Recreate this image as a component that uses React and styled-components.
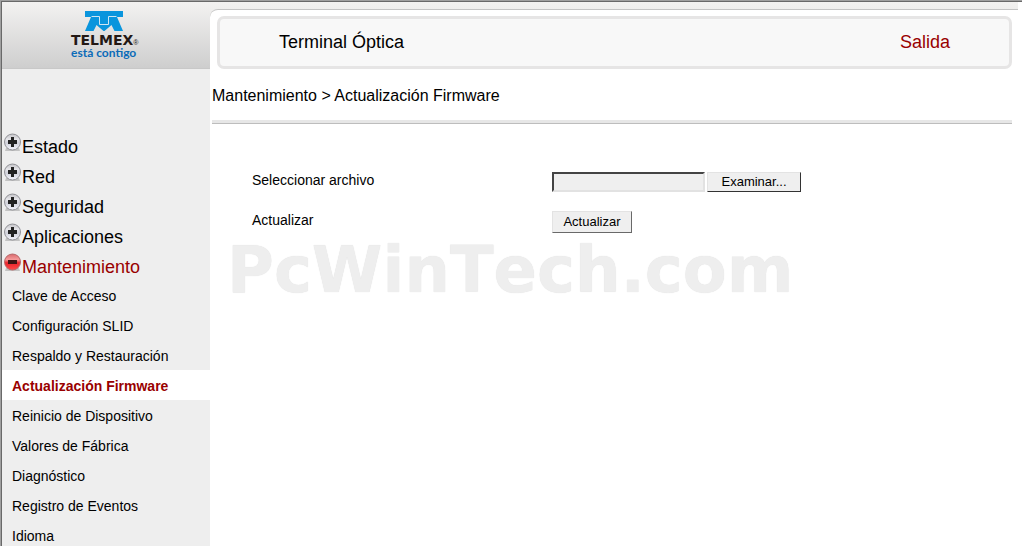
import React from "react";
import styled, { createGlobalStyle, css } from "styled-components";

const GlobalStyle = createGlobalStyle`
  * { box-sizing: border-box; }
  body {
    margin: 0;
    background: #fff;
    color: #000;
    font-family: "Liberation Sans", Arial, sans-serif;
    font-size: 14px;
  }
`;

const Page = styled.div`
  display: flex;
  height: 100vh;
  overflow: hidden;
  border-top: 1px solid #a0a0a0;
  border-left: 1px solid #a0a0a0;
`;

const Frame = styled.div`
  display: flex;
  flex: 1;
  min-width: 0;
  padding-right: 4px;
  border-top: 1px solid #696969;
  border-left: 1px solid #696969;
`;

const Sidebar = styled.aside`
  flex: none;
  width: 208px;
  background: #eeeeee;
`;

const Brand = styled.div`
  display: flex;
  flex-direction: column;
  align-items: flex-start;
  height: 67px;
  padding: 9px 0 0 69px;
  border-bottom: 1px solid #c8c8c8;
  background: linear-gradient(#f3f2f1, #cecece);
`;

const Mark = styled.svg`
  display: block;
  margin-left: 14px;
`;

const BrandName = styled.div`
  display: flex;
  align-items: flex-end;
  height: 14px;
  margin-top: 2px;
  color: #231815;
  font: bold 14px/14px "DejaVu Sans", sans-serif;
`;

const Registered = styled.span`
  font: 7px/8px "Liberation Sans", sans-serif;
`;

const Slogan = styled.div`
  color: #0b6bb8;
  font: 700 12px/12px Lato, sans-serif;
`;

const Menu = styled.nav`
  padding-top: 61px;
`;

const Section = styled.a`
  display: flex;
  gap: 1px;
  height: 30px;
  padding: 3px 0 0 2px;
  color: ${(p) => (p.$open ? "#990000" : "#000")};
  font-size: 18px;
  line-height: 28px;
  text-decoration: none;
`;

const Item = styled.a`
  display: block;
  padding-left: 10px;
  color: #000;
  line-height: 32px;
  height: 30px;
  text-decoration: none;
  ${(p) =>
    p.$active &&
    css`
      background: #fff;
      color: #990000;
      font-weight: bold;
    `}
`;

const TopArea = styled.div`
  flex: 1;
  min-width: 0;
  padding-top: 7px;
  background: linear-gradient(#f3f2f1, #cecece) top / 100% 67px no-repeat;
`;

const Content = styled.main`
  height: 100%;
  border-top: 1px solid #c4c4c4;
  border-top-left-radius: 8px;
  background: #fff;
  padding: 6px 6px 0 2px;
`;

const TitleBar = styled.header`
  display: flex;
  align-items: center;
  justify-content: space-between;
  height: 53px;
  margin-left: 5px;
  padding: 0 59px;
  border: 3px solid #e6e5e5;
  border-radius: 7px;
  background: #f8f8f8;
  font-size: 18px;
`;

const Title = styled.h1`
  margin: 0;
  font-size: 18px;
  font-weight: normal;
`;

const Logout = styled.a`
  color: #990000;
  text-decoration: none;
`;

const Breadcrumb = styled.div`
  height: 55px;
  padding-top: 17px;
  border-bottom: 1px solid #bdbdbd;
  box-shadow: inset 0 -3px #e7e7e7;
  font-size: 16px;
  line-height: 20px;
`;

const Form = styled.form`
  padding: 36px 0 0 40px;
`;

const Row = styled.div`
  display: grid;
  grid-template-columns: 300px 1fr;
  align-items: center;
  height: 40px;
`;

const Controls = styled.div`
  display: flex;
  gap: 2px;
  padding-top: 3px;
`;

const FilePath = styled.input`
  width: 153px;
  height: 20px;
  padding: 0 2px;
  border: 2px solid;
  border-color: #444 #e2e2e2 #e2e2e2 #444;
  background: #efefef;
`;

const Button = styled.button`
  width: ${(p) => (p.$wide ? 94 : 80)}px;
  height: ${(p) => (p.$wide ? 20 : 22)}px;
  padding: 0;
  border: 1px solid;
  border-color: #e3e3e3 ${(p) => (p.$wide ? "#333 #333" : "#696969 #696969")} #e3e3e3;
  background: #efefef;
  color: #000;
  font: 13px "Liberation Sans", Arial, sans-serif;
`;

const Watermark = styled.div`
  padding-left: 15px;
  color: #eeeeee;
  font: bold 64px/60px "DejaVu Sans", Verdana, sans-serif;
  font-kerning: none;
  text-shadow: 0 0 1px #dcdcdc;
`;

function ToggleIcon({ open }) {
  const id = open ? "ball-open" : "ball-closed";
  return (
    <svg width="17" height="20" viewBox="0 0 17 20" aria-hidden="true">
      <defs>
        <linearGradient id={id} x1="0" y1="0" x2="0" y2="1">
          <stop offset="0" stopColor={open ? "#d8696c" : "#c4c4c8"} />
          <stop offset="0.35" stopColor={open ? "#f59a9a" : "#e6e6ea"} />
          <stop offset="0.55" stopColor={open ? "#e9252b" : "#cfd0d9"} />
          <stop offset="1" stopColor={open ? "#ff4a4a" : "#f7f8ff"} />
        </linearGradient>
      </defs>
      <path d="M2 15h13l1 3H1z" fill="#c3c3c3" />
      <circle cx="8.5" cy="9" r="8" fill={`url(#${id})`} stroke={open ? "#b8686a" : "#929297"} strokeWidth="1" />
      <path d={open ? "M4 7h9v4H4z" : "M7 4h3v3h3v4h-3v3H7v-3H4V7h3z"} fill={open ? "#401414" : "#222"} />
    </svg>
  );
}

const sections = ["Estado", "Red", "Seguridad", "Aplicaciones", "Mantenimiento"];
const items = [
  "Clave de Acceso",
  "Configuración SLID",
  "Respaldo y Restauración",
  "Actualización Firmware",
  "Reinicio de Dispositivo",
  "Valores de Fábrica",
  "Diagnóstico",
  "Registro de Eventos",
  "Idioma",
];

export default function App() {
  return (
    <>
      <GlobalStyle />
      <Page>
        <Frame>
          <Sidebar>
            <Brand>
              <Mark width="38" height="20" viewBox="0 0 38 20" aria-hidden="true">
                <path
                  fill="#0a95dd"
                  d="M0 0H38V6H32L38 20H29.5L26.500 14L19.500 20H18.500L11.500 14L8.500 20H0L6 6H0Z"
                />
                <path
                  d="M6.500 5.500H14.500V13.500H23.500V5.500H31.500"
                  fill="none"
                  stroke="#cfe6f3"
                  strokeWidth="1"
                />
              </Mark>
              <BrandName>
                TELMEX<Registered>®</Registered>
              </BrandName>
              <Slogan>está contigo</Slogan>
            </Brand>
            <Menu>
              {sections.map((name) => {
                const open = name === "Mantenimiento";
                return (
                  <Section key={name} href="#" $open={open}>
                    <ToggleIcon open={open} />
                    {name}
                  </Section>
                );
              })}
              {items.map((name) => (
                <Item key={name} href="#" $active={name === "Actualización Firmware"}>
                  {name}
                </Item>
              ))}
            </Menu>
          </Sidebar>
          <TopArea>
            <Content>
              <TitleBar>
                <Title>Terminal Óptica</Title>
                <Logout href="#">Salida</Logout>
              </TitleBar>
              <Breadcrumb>Mantenimiento &gt; Actualización Firmware</Breadcrumb>
              <Form onSubmit={(e) => e.preventDefault()}>
                <Row>
                  <label htmlFor="file">Seleccionar archivo</label>
                  <Controls>
                    <FilePath id="file" type="text" />
                    <Button type="button" $wide>Examinar...</Button>
                  </Controls>
                </Row>
                <Row>
                  <label htmlFor="update">Actualizar</label>
                  <Controls>
                    <Button id="update" type="submit">Actualizar</Button>
                  </Controls>
                </Row>
              </Form>
              <Watermark>PcWinTech.com</Watermark>
            </Content>
          </TopArea>
        </Frame>
      </Page>
    </>
  );
}
